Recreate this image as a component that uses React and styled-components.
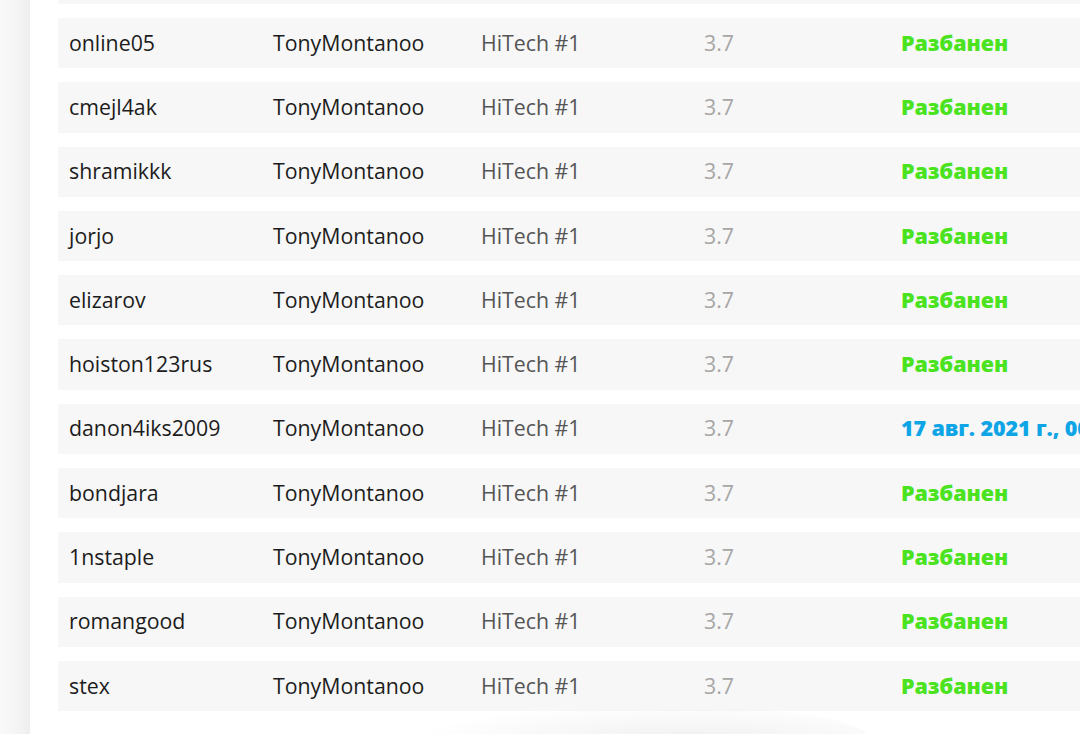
import React from "react";
import styled, { createGlobalStyle } from "styled-components";

const rows = [
  { user: "online05", status: "unban" },
  { user: "cmejl4ak", status: "unban" },
  { user: "shramikkk", status: "unban" },
  { user: "jorjo", status: "unban" },
  { user: "elizarov", status: "unban" },
  { user: "hoiston123rus", status: "unban" },
  { user: "danon4iks2009", status: "date" },
  { user: "bondjara", status: "unban" },
  { user: "1nstaple", status: "unban" },
  { user: "romangood", status: "unban" },
  { user: "stex", status: "unban" },
];

export default function App() {
  return (
    <>
      <GlobalStyle />
      <Page>
        <Strip />
        <Panel>
          <List>
            <Row>
              <Cell />
            </Row>
            {rows.map((r) => (
              <Row key={r.user}>
                <Cell>{r.user}</Cell>
                <Cell>TonyMontanoo</Cell>
                <Cell $tone="server">HiTech #1</Cell>
                <Cell $tone="muted">3.7</Cell>
                <Status $date={r.status === "date"}>
                  {r.status === "date" ? "17 авг. 2021 г., 00:00" : "Разбанен"}
                </Status>
              </Row>
            ))}
          </List>
          <FloatShadow />
        </Panel>
      </Page>
    </>
  );
}

const GlobalStyle = createGlobalStyle`
  html, body {
    margin: 0;
    padding: 0;
    background: #ffffff;
    font-family: "Open Sans", "Noto Sans", sans-serif;
  }
`;

const Page = styled.div`
  display: flex;
  height: 734px;
  width: 1080px;
  overflow: hidden;
`;

const Strip = styled.div`
  width: 30px;
  flex-shrink: 0;
  background: linear-gradient(to right, #f9f9f9 0%, #f4f4f4 60%, #eeeeee 100%);
`;

const Panel = styled.div`
  position: relative;
  flex: 1;
  background: #ffffff;
  padding-left: 28px;
  overflow: hidden;
`;

const List = styled.div`
  display: flex;
  flex-direction: column;
  gap: 14px;
  margin-top: -46.3px;
  width: 1100px;
`;

const Row = styled.div`
  display: grid;
  grid-template-columns: 204px 208px 223px 197px auto;
  align-items: center;
  height: 50.3px;
  padding-left: 11px;
  padding-bottom: 2px;
  box-sizing: border-box;
  background: #f7f7f7;
  font-size: 21.3px;
  white-space: nowrap;
`;

const Cell = styled.div`
  color: ${(p) =>
    p.$tone === "server" ? "#555555" : p.$tone === "muted" ? "#a6a6a6" : "#1c1c1c"};
`;

const Status = styled.div`
  font-weight: 800;
  font-size: 21.5px;
  letter-spacing: -0.1px;
  color: ${(p) => (p.$date ? "#0ea5e6" : "#4be31f")};
`;

const FloatShadow = styled.div`
  position: absolute;
  left: 380px;
  bottom: -40px;
  width: 460px;
  height: 70px;
  border-radius: 50%;
  background: radial-gradient(ellipse at 60% 50%, rgba(0, 0, 0, 0.06), rgba(0, 0, 0, 0) 70%);
  pointer-events: none;
`;
